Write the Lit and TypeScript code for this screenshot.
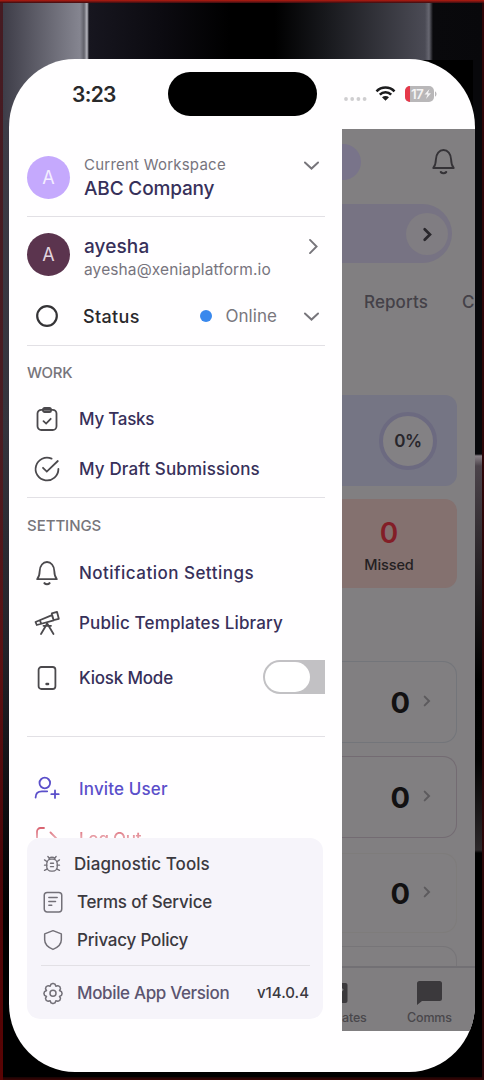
import { LitElement, html, css, svg } from "lit";
import { customElement } from "lit/decorators.js";

const glyphs: Record<string, any> = {
  down: svg`<path d="M4.500 8.500l7.500 7 7.500-7"/>`,
  right: svg`<path d="M8 4.500l7.500 7.500L8 19.500"/>`,
  ring: svg`<circle cx="12" cy="12" r="9.800" stroke-width="2.200"/>`,
  tasks: svg`<rect x="2.500" y="2.800" width="19" height="20.200" rx="3.800"/><rect x="8" y="1" width="8" height="4" rx="1.600"/><path d="M8.500 14.200l2.600 2.400 4.600-4.800"/>`,
  draft: svg`<path d="M16.600 1.600A11.400 11.400 0 1 0 23.400 12"/><path d="M8 10.800l3.800 3.800L22.800 4"/>`,
  bell: svg`<path d="M2.200 18.200c2.200-2.600 2.400-4.600 2.500-8.200C4.900 4.600 8 1 12 1s7.100 3.600 7.300 9c.1 3.600.3 5.600 2.500 8.200z" stroke-linejoin="round"/><path d="M9.500 22.200c1.300 1.200 3.700 1.200 5 0" stroke-width="2.200"/>`,
  scope: svg`<path d="M.5 11L17 4.200l1.700 5.200L1.800 14zM16.800 2.400l5.200-1.600 1.800 7-5.200 1.400zM12.200 12.500L6 23M12.200 12.500L18.500 23M8.500 14.800h7.500M5 9.500l1.200 3.200" stroke-linejoin="round"/>`,
  phone: svg`<rect x="3.600" y="1" width="16.800" height="22" rx="2.800"/><path d="M11.500 18h1.600" stroke-width="2.400"/>`,
  invite: svg`<circle cx="9.800" cy="6" r="5.300"/><path d="M.6 20.500c0-4.600 2.800-6.200 6.400-6.200h5.200M20 13.500v7.400M16.300 17.200h7.400"/>`,
  logout: svg`<path d="M9 1H5.500A3.500 3.500 0 0 0 2 4.500v15A3.500 3.500 0 0 0 5.500 23H9M15.500 5.500L22 12l-6.500 6.500M22 12H9"/>`,
  bug: svg`<rect x="5" y="5.500" width="14" height="16" rx="6"/><path d="M8 6c0-4 8-4 8 0M6.500 2l2 2.500M17.500 2l-2 2.500M2 6.500l3.600 2.500M22 6.500L18.400 9M2 13.500h3M22 13.500h-3M2 20.500l4-2M22 20.500l-4-2M10 11h4M10 15.500h4"/>`,
  terms: svg`<rect x="1.500" y=".5" width="21" height="23.500" rx="3.500"/><path d="M7 6.500h10M7 11.500h8M7 16h3.500"/>`,
  shield: svg`<path d="M12 .8l10 3.800v7.200c0 5.700-4.500 9.300-10 11.500C6.500 21.100 2 17.500 2 11.800V4.600z" stroke-linejoin="round"/>`,
  gear: svg`<path d="M9.500 1.500L12 .4l2.500 1.100.9 2.300 2.300-.6 2.500 1.200.8 2.600-1.200 2 2.300 1.300.8 2.300-.8 2.300-2.300 1.300 1.200 2-.8 2.600-2.500 1.200-2.300-.6-.9 2.300-2.500 1.100-2.500-1.100-.9-2.300-2.300.6-2.500-1.200L3 18.200l1.200-2-2.300-1.300-.8-2.300.8-2.300L4.200 9 3 7l.8-2.600 2.500-1.200 2.300.6z" stroke-linejoin="round"/><circle cx="12" cy="12.300" r="3.600"/>`,
};

const icon = (name: string, cls = "") =>
  html`<svg class="icon ${cls}" viewBox="0 0 24 24" fill="none" stroke="currentColor" stroke-linecap="round">${glyphs[name]}</svg>`;

@customElement("app-root")
export class AppRoot extends LitElement {
  static styles = css`
    :host { display: block; width: 484px; height: 1080px; overflow: hidden; font-family: Inter, "Liberation Sans", sans-serif; font-weight: 500; color: #37305a; }
    * { box-sizing: border-box; }
    svg { display: block; flex: none; overflow: visible; }
    .icon { stroke-width: 1.800; }
    .wall { height: 1080px; padding: 59px 9px 8px; background:
      linear-gradient(#b51c10, #3a0d12) 0 0 / 484px 3px no-repeat,
      linear-gradient(#451b22, #4a1c22 40%, #5c1012 62%, #4a0508 80%, #5a0404) 0 0 / 3px 1080px no-repeat,
      linear-gradient(#300507, #2a0608) 482px 0 / 2px 1080px no-repeat,
      linear-gradient(#160404, #3a0404) 0 1077px / 484px 3px no-repeat,
      linear-gradient(90deg, #3b3a45, #858590 80px, #62626b 84px, #b8b8c0 87px, #17161f 89px, #0c0b11 160px, #000 230px, #000 275px, #17181c 325px, #4b4b55 425px, #686872 429px, #09090c 433px, #08080b) 0 0 / 484px 60px no-repeat,
      linear-gradient(90deg, #3b3a45, #858590 80px) 0 60px / 80px 60px no-repeat,
      linear-gradient(#08080b 454px, #8a8288 456px, #4b434a 466px, #2a2529 560px, #000 680px, #030303 760px, #2c282a 850px, #000 853px) 473px 0 / 11px 1080px no-repeat,
      linear-gradient(90deg, transparent 200px, #000 200px),
      linear-gradient(#41404b, #3d3c47 12%, #34343d 40%, #23232a 60%, #101014 73%, #000 85%); }
    .phone { width: 466px; height: 1013px; border-radius: 66px / 68px; overflow: hidden; background: #fffeff; display: grid; grid-template-rows: 70px 943px; }
    .bar { display: grid; grid-template-columns: 159px 149px 1fr; align-items: center; color: #29292b; }
    .time { padding-left: 63px; font-size: 21px; font-weight: 600; letter-spacing: -.7px; }
    .island { height: 44px; border-radius: 22px; background: #000; }
    .signals { display: flex; align-items: center; padding-left: 26px; }
    .body { display: grid; grid-template-columns: 333px 133px; }
    .drawer { padding: 0 17px 0 18px; display: flex; flex-direction: column; }
    .row { display: flex; align-items: center; height: 50px; flex: none; white-space: nowrap; }
    .ws { height: 87px; padding-top: 9px; }
    .user { height: 74px; }
    .avatar { width: 43px; height: 43px; border-radius: 50%; background: #c5a9fd; color: #f4eeff; display: grid; place-items: center; font-size: 18px; font-weight: 400; margin-right: 14px; }
    .plum { background: #5b344e; color: #e2d6df; }
    .names { flex: 1; }
    .user .names { padding-top: 7px; }
    .small { font-size: 15px; line-height: 22px; font-weight: 400; color: #77747d; letter-spacing: .23px; }
    .mail { font-size: 15.500px; letter-spacing: .12px; }
    .big { font-size: 19px; line-height: 25px; color: #37305a; letter-spacing: -.15px; }
    .user .big { letter-spacing: .1px; }
    .chev { width: 21px; height: 21px; color: #77757b; margin-right: 3px; stroke-width: 2.200; }
    .up { margin-bottom: 23px; }
    .upr { margin-bottom: 15px; margin-right: 1px; }
    .line { height: 1px; background: #e2e0e5; flex: none; }
    .status { margin-bottom: 4px; color: #29282b; font-size: 18px; letter-spacing: .35px; }
    .lead { width: 24px; height: 24px; margin: 0 20px 0 8px; color: #4b494d; }
    .status .lead { margin-right: 24px; color: #343336; }
    .dot { width: 12px; height: 12px; border-radius: 50%; background: #3988ed; margin: 0 13px 0 auto; }
    .online { color: #79767d; font-size: 17px; font-weight: 400; letter-spacing: .05px; margin-right: 24px; }
    .head { height: 48px; padding-top: 4px; font-size: 15px; color: #77757b; letter-spacing: -.3px; }
    .set { height: 50px; padding-top: 5px; letter-spacing: -.05px; }
    .item { font-size: 17px; letter-spacing: -.25px; }
    .wide1 { letter-spacing: .15px; }
    .wide2 { letter-spacing: .48px; }
    .gap3 { margin-bottom: 3px; }
    .kiosk { height: 60px; margin-bottom: 28px; letter-spacing: -.2px; }
    .toggle { width: 62px; height: 34px; border-radius: 17px 0 0 17px; background: #c2c1c4; margin-left: auto; margin-bottom: 3px; padding: 2px; }
    .knob { width: 45px; height: 30px; border-radius: 15px; background: #fff; }
    .invite { margin-top: 27px; color: #5b4fca; }
    .invite .lead, .out .lead { color: inherit; }
    .clip { height: 24px; flex: none; overflow: hidden; -webkit-mask-image: linear-gradient(#000 50%, #0008); mask-image: linear-gradient(#000 50%, #0008); }
    .out { color: #d65766; }
    .panel { height: 181px; width: 296px; flex: none; border-radius: 13px; background: #f6f4fa; padding: 7px 14px 0 16px; color: #3b393f; }
    .panel .row { height: 38px; font-size: 17px; letter-spacing: -.2px; }
    .panel .row.wide1 { letter-spacing: .08px; }
    .panel .line { margin: 6px -1px 0 -2px; }
    .panel .lead { width: 20px; height: 20px; margin: 0 14px 0 0; color: #737078; }
    .panel .bug { width: 18px; height: 18px; margin: 0 13px 0 0; }
    .panel .row.ver { height: 53px; color: #5c5570; letter-spacing: -.35px; }
    .panel .num { margin-left: auto; font-size: 15px; color: #3b393f; letter-spacing: 0; }
    .page { height: 902px; background: #817f81; overflow: hidden; display: flex; flex-direction: column; color: #444148; }
    .top { height: 75px; padding: 15px 19px 0 0; display: flex; justify-content: space-between; }
    .pill { width: 19px; height: 36px; border-radius: 0 18px 18px 0; background: #79748a; }
    .alarm { width: 25px; height: 27px; margin-top: 4px; color: #353337; }
    .banner { width: 110px; height: 59px; flex: none; border-radius: 0 30px 30px 0; background: #777383; padding: 9px 4px 0 0; }
    .go { width: 42px; height: 42px; border-radius: 50%; background: #807d82; margin-left: auto; display: grid; place-items: center; color: #29272c; }
    .go svg { width: 17px; height: 17px; stroke-width: 3.800; }
    .tabs { height: 132px; padding: 27px 0 0 22px; font-size: 17px; line-height: 24px; letter-spacing: .1px; display: flex; flex: none; gap: 34px; }
    .blue { width: 115px; height: 91px; flex: none; border-radius: 0 12px 12px 0; background: #757584; display: flex; justify-content: flex-end; align-items: center; padding-right: 20px; }
    .pct { width: 58px; height: 58px; border: 4px solid #6c6a80; border-radius: 50%; background: #838184; display: grid; place-items: center; font-size: 17px; font-weight: 600; color: #28262c; letter-spacing: -.4px; }
    .red { width: 115px; height: 89px; flex: none; margin: 13px 0 73px; border-radius: 0 12px 12px 0; background: #84716f; padding: 17px 21px 0 0; text-align: center; font-size: 14.500px; line-height: 30px; letter-spacing: -.1px; color: #232022; }
    .missed { font-size: 28px; line-height: 34px; font-weight: 600; color: #831e27; }
    .card { width: 115px; height: 82px; margin-bottom: 13px; flex: none; border: 1.500px solid #73757a; border-left: 0; border-radius: 0 14px 14px 0; display: flex; align-items: center; justify-content: flex-end; padding-right: 22px; gap: 10px; font-size: 29px; font-weight: 700; color: #121112; }
    .card svg { width: 14px; height: 14px; color: #5c5a5d; stroke-width: 3.300; margin-bottom: 2px; }
    .rose { border-color: #736b72; margin-bottom: 15px; }
    .faint { border-color: #7e7c7b; height: 80px; margin-bottom: 13px; }
    .cut { height: 20px; border-bottom: 0; border-radius: 0 14px 0 0; margin: 0; border-color: #777578; }
    .nav { height: 65px; flex: none; border-top: 2px solid #727074; display: flex; font-size: 12.500px; color: #49474b; padding-top: 13px; background: #807e80; }
    .tab { display: flex; flex-direction: column; gap: 5px; line-height: 18px; align-items: center; letter-spacing: -.15px; }
    .tab svg { width: 25px; height: 23px; }
    .tpl { width: 65px; align-items: flex-start; }
  `;

  item(name: string, label: string, cls = "") {
    return html`<div class="row item ${cls}">${icon(name, "lead")}<span>${label}</span></div>`;
  }

  render() {
    return html`<div class="wall"><div class="phone">
      <div class="bar">
        <span class="time">3:23</span><div class="island"></div>
        <div class="signals"><svg width="96" height="22" viewBox="0 0 96 22">
          <g fill="#cfced0"><circle cx="3" cy="16" r="1.900"/><circle cx="9.200" cy="16" r="1.900"/><circle cx="15.400" cy="16" r="1.900"/><circle cx="21.600" cy="16" r="1.900"/></g>
          <g fill="none" stroke="#1c1c1e" stroke-width="2.600"><path d="M33.500 8.300c5-5 13-5 18 0M36.800 11.700c3.200-3.200 8.200-3.200 11.400 0"/></g>
          <path d="M39 14.300c2-1.800 5-1.800 7 0l-3.500 3.500z" fill="#1c1c1e"/>
          <rect x="62" y="3" width="29" height="16" rx="5" fill="#b9b7b9"/><path d="M67 3v16a5 5 0 0 1-5-5V8a5 5 0 0 1 5-5z" fill="#e6384a"/><path d="M92 8.500c2 .6 2 4.400 0 5z" fill="#b9b7b9"/>
          <text x="68" y="16" font-size="13.500" font-weight="600" fill="#f4f3f4" letter-spacing="-.6">17</text><path d="M86.500 6l-5 5.500h3L83 16l5-5.700h-3z" fill="#f4f3f4"/>
        </svg></div>
      </div>
      <div class="body">
        <div class="drawer">
          <div class="row ws"><div class="avatar">A</div><div class="names"><div class="small">Current Workspace</div><div class="big">ABC Company</div></div>${icon("down", "chev up")}</div>
          <div class="line"></div>
          <div class="row user"><div class="avatar plum">A</div><div class="names"><div class="big">ayesha</div><div class="small mail">ayesha@xeniaplatform.io</div></div>${icon("right", "chev upr")}</div>
          <div class="row status">${icon("ring", "lead")}<span>Status</span><i class="dot"></i><span class="online">Online</span>${icon("down", "chev")}</div>
          <div class="line"></div>
          <div class="row head">WORK</div>
          ${this.item("tasks", "My Tasks")}
          ${this.item("draft", "My Draft Submissions", "gap3 wide1")}
          <div class="line"></div>
          <div class="row head set">SETTINGS</div>
          ${this.item("bell", "Notification Settings", "wide2")}
          ${this.item("scope", "Public Templates Library", "wide1")}
          <div class="row item kiosk">${icon("phone", "lead")}<span>Kiosk Mode</span><div class="toggle"><div class="knob"></div></div></div>
          <div class="line"></div>
          ${this.item("invite", "Invite User", "invite wide1")}
          <div class="clip">${this.item("logout", "Log Out", "out")}</div>
          <div class="panel">
            <div class="row wide1">${icon("bug", "lead bug")}<span>Diagnostic Tools</span></div>
            <div class="row">${icon("terms", "lead")}<span>Terms of Service</span></div>
            <div class="row">${icon("shield", "lead")}<span>Privacy Policy</span></div>
            <div class="line"></div>
            <div class="row ver">${icon("gear", "lead")}<span>Mobile App Version</span><span class="num">v14.0.4</span></div>
          </div>
        </div>
        <div class="page">
          <div class="top"><div class="pill"></div>${icon("bell", "alarm")}</div>
          <div class="banner"><div class="go">${icon("right")}</div></div>
          <div class="tabs"><span>Reports</span><span>C</span></div>
          <div class="blue"><div class="pct">0%</div></div>
          <div class="red"><div class="missed">0</div>Missed</div>
          <div class="card">0${icon("right")}</div>
          <div class="card rose">0${icon("right")}</div>
          <div class="card faint">0${icon("right")}</div>
          <div class="card cut"></div>
          <div class="nav">
            <div class="tab tpl"><svg viewBox="0 0 25 23"><path d="M-10 2H3.500a2 2 0 0 1 2 2v16a2 2 0 0 1-2 2H-10z" fill="#3b393c"/><path d="M-3 12l4-4" stroke="#807e80" stroke-width="2"/></svg><span>ates</span></div>
            <div class="tab"><svg viewBox="0 0 25 23"><path d="M2.500 0h20A2.500 2.500 0 0 1 25 2.500v15a2.500 2.500 0 0 1-2.500 2.500H5l-5 4V2.500A2.500 2.500 0 0 1 2.500 0z" fill="#3b393c"/></svg><span>Comms</span></div>
          </div>
        </div>
      </div>
    </div></div>`;
  }
}
